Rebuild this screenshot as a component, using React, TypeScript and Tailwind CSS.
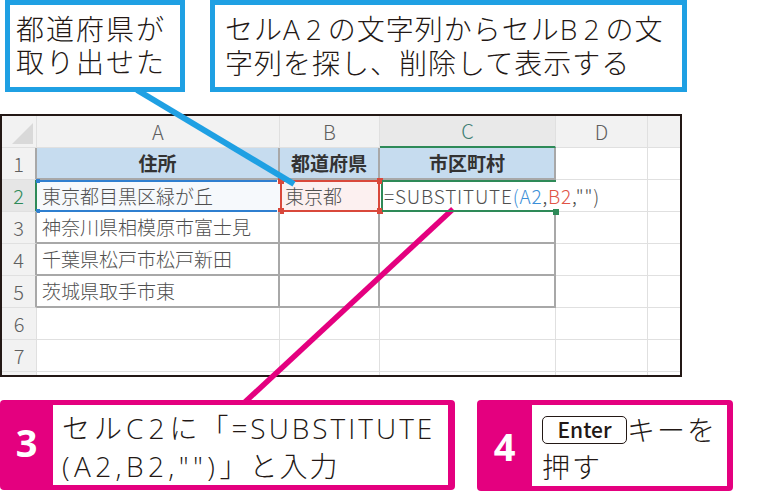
import React from "react";

const R = {
  L: "border-r border-r-[#e0e0e0]",
  D: "border-r-2 border-r-[#a8a8a8]",
  N: "",
};
const B = {
  L: "border-b border-b-[#e0e0e0]",
  D: "border-b-2 border-b-[#a8a8a8]",
  N: "",
};

type K = "L" | "D" | "N";

function C({
  r,
  b,
  className = "",
  children,
}: {
  r: K;
  b: K;
  className?: string;
  children?: React.ReactNode;
}) {
  return (
    <div className={"relative flex items-center " + R[r] + " " + B[b] + " " + className}>
      {children}
    </div>
  );
}

const HDR = "bg-[#f2f2f2] justify-center text-[20px] text-[#5f5f5f] font-light";
const TXT = "pl-[5px] text-[19px] text-[#4f4f4f] whitespace-nowrap font-light";
const H1 = "bg-[#c6dcef] justify-center text-[19px] font-bold text-[#333333]";
const LAT = "font-['Open_Sans',sans-serif] font-light";

function Sheet() {
  const rows: { n: string; a?: string }[] = [
    { n: "3", a: "神奈川県相模原市富士見" },
    { n: "4", a: "千葉県松戸市松戸新田" },
    { n: "5", a: "茨城県取手市東" },
  ];
  return (
    <div className="mt-[22px] w-[682px] h-[263px] border-2 border-[#231815] grid grid-cols-[35px_243px_100px_176px_92px_32px] grid-rows-[repeat(8,32px)_1fr] overflow-hidden bg-white">
      {/* header row */}
      <C r="L" b="L" className="bg-[#f2f2f2]">
        <svg className="absolute left-0 top-0" width="35" height="32" viewBox="0 0 35 32">
          <polygon points="10,28 31,28 31,7" fill="#d9d9d9" />
        </svg>
      </C>
      <C r="L" b="L" className={HDR}>A</C>
      <C r="L" b="L" className={HDR}>B</C>
      <div className="relative flex items-center justify-center bg-[#e9e9e9] border-r border-r-[#e0e0e0] border-b-2 border-b-[#2e8a58] text-[20px] text-[#3d7d72] font-light">C</div>
      <C r="L" b="L" className={HDR}>D</C>
      <C r="N" b="L" className="bg-[#f2f2f2]" />

      {/* row 1 */}
      <C r="D" b="L" className={HDR}>1</C>
      <C r="D" b="D" className={H1}>住所</C>
      <C r="D" b="D" className={H1}>都道府県</C>
      <C r="D" b="D" className={H1}>市区町村</C>
      <C r="L" b="L" />
      <C r="N" b="L" />

      {/* row 2 */}
      <div className="relative flex items-center justify-center bg-[#e6e6e6] border-r-2 border-r-[#2e8a58] border-b border-b-[#e0e0e0] text-[20px] text-[#2e8a58] font-light">2</div>
      <C r="N" b="N" className={TXT + " bg-[#f6f9fc]"}>
        東京都目黒区緑が丘
        <div className="absolute left-0 right-[3px] top-0 h-[2px] bg-[#2f7fd0]" />
        <div className="absolute left-0 right-[3px] bottom-0 h-[2px] bg-[#2f7fd0]" />
        <div className="absolute left-[-1px] top-[-1px] w-[4px] h-[4px] bg-[#2f7fd0]" />
        <div className="absolute left-[-1px] bottom-[-1px] w-[4px] h-[4px] bg-[#2f7fd0]" />
      </C>
      <C r="N" b="N" className={TXT + " bg-[#fcf0f0]"}>
        東京都
        <div className="absolute inset-0 border-2 border-[#d9483b]" />
        <div className="absolute left-[-2px] top-[-2px] w-[6px] h-[6px] bg-[#d9483b]" />
        <div className="absolute left-[-2px] bottom-[-2px] w-[6px] h-[6px] bg-[#d9483b]" />
        <div className="absolute right-[-3px] top-[-2px] w-[6px] h-[6px] bg-[#d9483b]" />
        <div className="absolute right-[-3px] bottom-[-2px] w-[6px] h-[6px] bg-[#d9483b]" />
      </C>
      <C r="N" b="N" className="z-10 pl-[4px] text-[19px] tracking-[0.8px] text-[#4f4f4f] whitespace-nowrap overflow-visible font-light">
        <span>=SUBSTITUTE</span>
        <span className="text-[#3b8fd8]">(A2</span>
        <span>,</span>
        <span className="text-[#e05446]">B2</span>
        <span>,"")</span>
        <span className="ml-[3px] inline-block w-[2px] h-[24px] bg-[#222222]" />
        <div className="absolute left-0 right-0 top-0 h-[2px] bg-[#2e8a58]" />
        <div className="absolute left-0 right-0 bottom-0 h-[2px] bg-[#2e8a58]" />
        <div className="absolute left-[1px] top-0 bottom-0 w-[2px] bg-[#2e8a58]" />
        <div className="absolute right-[-3px] bottom-[-3px] w-[6px] h-[6px] bg-[#2e8a58]" />
        <div className="absolute left-[-3px] top-[-2px] w-[5px] h-[6px] bg-[#d9483b]" />
        <div className="absolute left-[-3px] bottom-[-2px] w-[5px] h-[6px] bg-[#d9483b]" />
      </C>
      <C r="L" b="L" />
      <C r="N" b="L" />

      {/* rows 3-5 */}
      {rows.map((row) => (
        <React.Fragment key={row.n}>
          <C r="D" b="L" className={HDR}>{row.n}</C>
          <C r="D" b="D" className={TXT}>{row.a}</C>
          <C r="D" b="D" />
          <C r="D" b="D" />
          <C r="L" b="L" />
          <C r="N" b="L" />
        </React.Fragment>
      ))}

      {/* rows 6-7 */}
      {["6", "7"].map((n) => (
        <React.Fragment key={n}>
          <C r="L" b="L" className={HDR}>{n}</C>
          <C r="L" b="L" />
          <C r="L" b="L" />
          <C r="L" b="L" />
          <C r="L" b="L" />
          <C r="N" b="L" />
        </React.Fragment>
      ))}

      {/* partial row 8 */}
      <C r="L" b="N" className="bg-[#f2f2f2]" />
      <C r="L" b="N" />
      <C r="L" b="N" />
      <C r="L" b="N" />
      <C r="L" b="N" />
      <C r="N" b="N" />
    </div>
  );
}

export default function App() {
  return (
    <div className="relative w-[783px] h-[492px] overflow-hidden bg-white font-['Noto_Sans_CJK_JP',sans-serif] text-[#231815]">
      {/* top callouts */}
      <div className="flex h-[92px]">
        <div className="ml-[5px] w-[180px] h-[92px] border-[5px] border-[#1fa0e3] bg-white pl-[6px] pt-[7px] text-[28px] leading-[33px] tracking-[2px] font-light">
          <div>都道府県が</div>
          <div>取り出せた</div>
        </div>
        <div className="ml-[25px] w-[477px] h-[92px] border-[5px] border-[#1fa0e3] bg-white pl-[10px] pt-[7px] text-[28px] leading-[33px] tracking-[1px] whitespace-nowrap font-light">
          <div>
            セル<span className={LAT + " tracking-[6px]"}>A2</span>の文字列からセル
            <span className={LAT + " tracking-[6px]"}>B2</span>の文
          </div>
          <div>字列を探し、削除して表示する</div>
        </div>
      </div>

      <Sheet />

      {/* bottom callouts */}
      <div className="mt-[23px] flex items-start">
        <div className="w-[455px] h-[90px] rounded-[4px] bg-[#e4007f] flex py-[5px] pr-[7px]">
          <div className="w-[53px] pb-[6px] flex items-center justify-center text-white text-[38px] font-bold leading-none font-['Noto_Sans',sans-serif]">
            3
          </div>
          <div className="flex-1 bg-white pl-[9px] pt-[4px] text-[28px] leading-[37px] whitespace-nowrap font-light">
            <div>
              <span className="tracking-[4px]">セル</span>
              <span className={LAT + " tracking-[5px]"}>C2</span>
              <span className="tracking-[3px]">に「</span>
              <span className={LAT + " tracking-[3px]"}>=SUBSTITUTE</span>
            </div>
            <div>
              <span className={LAT + " tracking-[4.4px]"}>(A2,B2,"")</span>
              <span className="tracking-[2px]">」と入力</span>
            </div>
          </div>
        </div>
        <div className="ml-[22px] w-[256px] h-[91px] rounded-[4px] bg-[#e4007f] flex py-[5px] pr-[6px]">
          <div className="w-[55px] flex items-center justify-center text-white text-[38px] font-bold leading-none font-['Noto_Sans',sans-serif]">
            4
          </div>
          <div className="flex-1 bg-white pl-[10px] pt-[6px] text-[28px] leading-[37px] tracking-[2px] whitespace-nowrap font-light">
            <div className="flex items-center">
              <span className="inline-flex items-center justify-center w-[85px] h-[28px] border border-[#231815] rounded-[5px] text-[21px] font-medium tracking-normal leading-none">
                Enter
              </span>
              <span>キーを</span>
            </div>
            <div>押す</div>
          </div>
        </div>
      </div>

      {/* pointer lines */}
      <svg className="absolute left-0 top-0 pointer-events-none" width="783" height="492" viewBox="0 0 783 492">
        <line x1="137" y1="90" x2="294" y2="184" stroke="#1fa0e3" strokeWidth="6" />
        <line x1="453" y1="209" x2="245" y2="402" stroke="#e4007f" strokeWidth="5.5" />
      </svg>
    </div>
  );
}
